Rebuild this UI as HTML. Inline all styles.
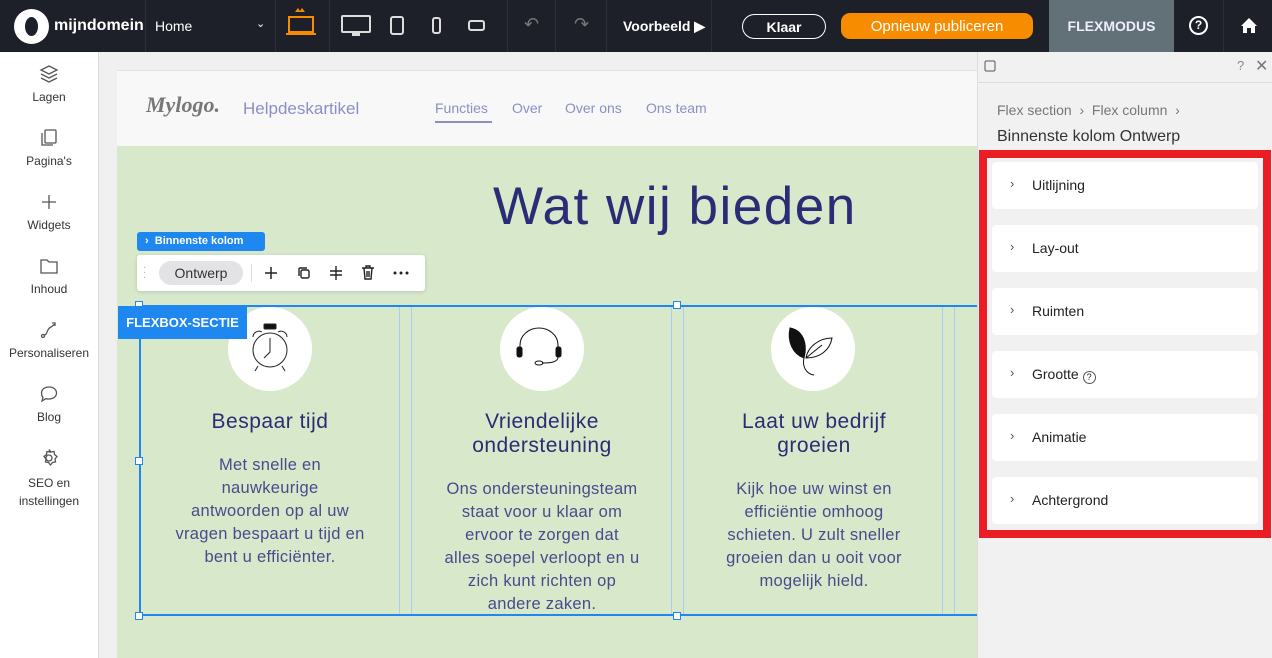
<!DOCTYPE html>
<html><head><meta charset="utf-8"><style>
*{box-sizing:border-box;margin:0;padding:0}
body{width:1272px;height:658px;overflow:hidden;font-family:"Liberation Sans",sans-serif;background:#f0f0f0;position:relative}
.a{position:absolute}
.top{left:0;top:0;width:1272px;height:52px;background:#1e2029;color:#fff}
.sep{position:absolute;top:0;width:1px;height:52px;background:#2e3039}
.side{left:0;top:52px;width:99px;height:606px;background:#fff;border-right:1px solid #ddd}
.si{position:absolute;left:0;width:98px;text-align:center;font-size:12px;color:#333}
.si svg{display:block;margin:0 auto 6px}
.page{left:117px;top:70px;width:860px;height:588px;background:#d8e8cb}
.hdr{left:117px;top:70px;width:860px;height:76px;background:#f8f8f8;border-top:1px solid #e2e2e2}
.nav{font-size:14px;color:#8b8fc4;top:100px}
.col{position:absolute;text-align:center;color:#2a2d75;white-space:nowrap}
.col h3{font-size:21px;font-weight:normal;line-height:24px;color:#2a2d75;letter-spacing:.5px}
.col p{font-size:16.5px;line-height:23px;color:#474b8c;margin-top:20px;letter-spacing:.3px}
.circ{position:absolute;width:84px;height:84px;border-radius:50%;background:#fff}
.panel{left:977px;top:52px;width:295px;height:606px;background:#f1f1f1;border-left:1px solid #ddd}
.card{position:absolute;left:992px;width:266px;height:47px;background:#fff;border-radius:4px;font-size:14px;color:#222}
.card span{position:absolute;left:40px;top:15px}
.card i{position:absolute;left:18px;top:14px;font-style:normal;color:#555;font-size:13px}
.h{position:absolute;width:8px;height:8px;background:#fff;border:1px solid #1e88f0}
.btn{display:flex;align-items:center;justify-content:center}
</style></head><body>
<div class="a top">
 <div class="a" style="left:14px;top:9px;width:35px;height:35px;border-radius:50%;background:#fff"></div>
 <div class="a" style="left:25px;top:17px;width:13px;height:19px;border-radius:50%;background:#1e2029"></div>
 <div class="a" style="left:54px;top:17px;font-size:16px;font-weight:bold">mijndomein</div>
 <div class="sep" style="left:145px"></div>
 <div class="a" style="left:155px;top:18px;font-size:14px">Home</div>
 <div class="a" style="left:256px;top:17px;font-size:11px">&#8964;</div>
 <div class="sep" style="left:275px"></div>
 <svg class="a" style="left:284px;top:6px" width="34" height="30"><path d="M11 6l3-4 2 3 2-3 3 4z" fill="#f88c00"/><rect x="5" y="11" width="24" height="15" fill="none" stroke="#f88c00" stroke-width="2"/><rect x="2" y="27" width="30" height="2" fill="#f88c00"/></svg>
 <div class="sep" style="left:329px"></div>
 <svg class="a" style="left:340px;top:14px" width="32" height="24"><rect x="2" y="2" width="28" height="16" rx="1" fill="none" stroke="#ddd" stroke-width="2"/><rect x="12" y="19" width="8" height="3" fill="#ddd"/></svg>
 <svg class="a" style="left:389px;top:15px" width="16" height="22"><rect x="2" y="2" width="12" height="17" rx="2" fill="none" stroke="#ddd" stroke-width="2"/></svg>
 <svg class="a" style="left:431px;top:16px" width="12" height="20"><rect x="2" y="2" width="7" height="15" rx="2" fill="none" stroke="#ddd" stroke-width="2"/></svg>
 <svg class="a" style="left:467px;top:18px" width="20" height="14"><rect x="2" y="3" width="15" height="9" rx="2" fill="none" stroke="#ddd" stroke-width="2"/></svg>
 <div class="sep" style="left:507px"></div>
 <div class="a" style="left:524px;top:14px;font-size:18px;color:#777">&#8630;</div>
 <div class="sep" style="left:555px"></div>
 <div class="a" style="left:574px;top:14px;font-size:18px;color:#777">&#8631;</div>
 <div class="sep" style="left:606px"></div>
 <div class="a" style="left:623px;top:18px;font-size:14px;font-weight:bold">Voorbeeld &#9654;</div>
 <div class="sep" style="left:711px"></div>
 <div class="a btn" style="left:742px;top:14px;width:84px;height:25px;border:1.5px solid #fff;border-radius:13px;font-size:14px;font-weight:bold">Klaar</div>
 <div class="a btn" style="left:841px;top:13px;width:192px;height:26px;background:#f88c00;border-radius:9px;font-size:15px">Opnieuw publiceren</div>
 <div class="a" style="left:1049px;top:0;width:125px;height:52px;background:#617177;text-align:center;line-height:52px;font-size:14px;font-weight:bold;color:#eef">FLEXMODUS</div>
 <div class="a" style="left:1189px;top:16px;width:19px;height:19px;border:2px solid #fff;border-radius:50%;text-align:center;font-size:12px;font-weight:bold;line-height:15px">?</div>
 <div class="sep" style="left:1223px"></div>
 <svg class="a" style="left:1240px;top:17px" width="18" height="17"><path d="M9 1L1 9h2v7h4v-5h4v5h4V9h2z" fill="#fff"/></svg>
</div>
<div class="a side">
 <div class="si" style="top:12px"><svg width="20" height="20" fill="none" stroke="#555" stroke-width="1.3"><path d="M10 2l8 4-8 4-8-4z M2 10l8 4 8-4 M2 14l8 4 8-4"/></svg>Lagen</div>
 <div class="si" style="top:76px"><svg width="20" height="20" fill="none" stroke="#555" stroke-width="1.3"><rect x="6" y="2" width="11" height="13" rx="1"/><path d="M3 5v12h11"/></svg>Pagina's</div>
 <div class="si" style="top:140px"><svg width="20" height="20" stroke="#555" stroke-width="1.3"><path d="M10 3v14M3 10h14"/></svg>Widgets</div>
 <div class="si" style="top:204px"><svg width="20" height="20" fill="none" stroke="#555" stroke-width="1.3"><path d="M2 4h6l2 2h8v11H2z"/></svg>Inhoud</div>
 <div class="si" style="top:268px"><svg width="20" height="20" fill="none" stroke="#555" stroke-width="1.3"><circle cx="4" cy="16" r="1.5"/><path d="M5 15c4 0 2-6 7-8l4-3M13 3h3v3"/></svg>Personaliseren</div>
 <div class="si" style="top:332px"><svg width="20" height="20" fill="none" stroke="#555" stroke-width="1.3"><path d="M10 3c4.5 0 7.5 2.6 7.5 6s-3 6-7.5 6c-1 0-2-.1-3-.4L3 17l1-3.5C3 12.3 2.5 10.8 2.5 9c0-3.4 3-6 7.5-6z"/></svg>Blog</div>
 <div class="si" style="top:396px;line-height:18px"><svg width="20" height="20" fill="none" stroke="#555" stroke-width="1.3"><circle cx="10" cy="10" r="3"/><path d="M10 1.5l2 2.5 3-.5.5 3 2.5 2-2 2.5.5 3-3 .5-2 2.5-2-2.5-3-.5.5-3-2-2.5 2.5-2 .5-3 3 .5z"/></svg>SEO en<br>instellingen</div>
</div>
<div class="a page"></div>
<div class="a hdr"></div>
<div class="a" style="left:146px;top:92px;font-family:'Liberation Serif',serif;font-style:italic;font-weight:bold;font-size:22px;color:#777">Mylogo.</div>
<div class="a" style="left:243px;top:99px;font-size:17px;color:#8b8fc4">Helpdeskartikel</div>
<div class="a nav" style="left:435px">Functies</div>
<div class="a" style="left:435px;top:121px;width:57px;height:2px;background:#8b8fc4"></div>
<div class="a nav" style="left:512px">Over</div>
<div class="a nav" style="left:565px">Over ons</div>
<div class="a nav" style="left:646px">Ons team</div>
<div class="a" style="left:493px;top:176px;font-size:53px;color:#2a2d75;letter-spacing:1.5px">Wat wij bieden</div>

<div class="a" style="left:139px;top:305px;width:840px;height:311px;border:2px solid #1e88f0;border-right:none"></div>
<div class="a" style="left:399px;top:307px;width:13px;height:307px;border-left:1px solid #a9cdf5;border-right:1px solid #a9cdf5"></div>
<div class="a" style="left:671px;top:307px;width:13px;height:307px;border-left:1px solid #a9cdf5;border-right:1px solid #a9cdf5"></div>
<div class="a" style="left:942px;top:307px;width:13px;height:307px;border-left:1px solid #a9cdf5;border-right:1px solid #a9cdf5"></div>
<div class="h" style="left:135px;top:301px"></div>
<div class="h" style="left:135px;top:457px"></div>
<div class="h" style="left:135px;top:612px"></div>
<div class="h" style="left:673px;top:301px"></div>
<div class="h" style="left:673px;top:612px"></div>

<div class="circ" style="left:228px;top:307px"></div>
<svg class="a" style="left:245px;top:322px" width="50" height="54" fill="none" stroke="#222" stroke-width="1"><rect x="19" y="2" width="12" height="5" rx="1" fill="#111"/><circle cx="25" cy="28" r="17"/><path d="M25 16v14l-6 6"/><path d="M8 15a6 6 0 0 1 9-5M42 15a6 6 0 0 0-9-5M13 44l-3 5M37 44l3 5"/></svg>
<div class="circ" style="left:500px;top:307px"></div>
<svg class="a" style="left:512px;top:325px" width="60" height="45" fill="none" stroke="#111" stroke-width="1"><path d="M8 27V20a19 17 0 0 1 38 0v7"/><rect x="5" y="22" width="5" height="10" rx="2" fill="#111"/><rect x="44" y="22" width="5" height="10" rx="2" fill="#111"/><path d="M46 32q0 6-14 6h-2"/><ellipse cx="27" cy="38" rx="4" ry="2"/></svg>
<div class="circ" style="left:771px;top:307px"></div>
<svg class="a" style="left:785px;top:318px" width="60" height="62" fill="none" stroke="#111" stroke-width="1"><path d="M5 10c12 2 18 14 14 30C8 36 2 24 5 10z" fill="#111"/><path d="M21 40c2-12 14-20 26-20-2 12-12 20-26 20zM21 40l16-13"/><path d="M19 40c-2 8 2 16 10 17"/></svg>

<div class="col" style="left:155px;top:410px;width:230px"><h3>Bespaar tijd</h3><p>Met snelle en<br>nauwkeurige<br>antwoorden op al uw<br>vragen bespaart u tijd en<br>bent u efficiënter.</p></div>
<div class="col" style="left:427px;top:410px;width:230px"><h3>Vriendelijke<br>ondersteuning</h3><p>Ons ondersteuningsteam<br>staat voor u klaar om<br>ervoor te zorgen dat<br>alles soepel verloopt en u<br>zich kunt richten op<br>andere zaken.</p></div>
<div class="col" style="left:699px;top:410px;width:230px"><h3>Laat uw bedrijf<br>groeien</h3><p>Kijk hoe uw winst en<br>efficiëntie omhoog<br>schieten. U zult sneller<br>groeien dan u ooit voor<br>mogelijk hield.</p></div>

<div class="a" style="left:118px;top:306px;width:129px;height:33px;background:#1e88f0;color:#fff;font-size:13px;font-weight:bold;line-height:33px;text-align:center">FLEXBOX-SECTIE</div>
<div class="a" style="left:137px;top:232px;width:128px;height:19px;background:#1e88f0;border-radius:3px;color:#fff;font-size:11px;font-weight:bold;line-height:19px;padding-left:8px">&#8250;&nbsp; Binnenste kolom</div>
<div class="a" style="left:137px;top:255px;width:288px;height:36px;background:#fff;border-radius:3px;box-shadow:0 1px 4px rgba(0,0,0,.15)">
 <div class="a" style="left:6px;top:10px;color:#aaa;font-size:10px;line-height:5px">·<br>·<br>·</div>
 <div class="a" style="left:22px;top:6px;width:84px;height:24px;background:#e3e3e5;border-radius:12px;text-align:center;line-height:24px;font-size:14px;color:#333">Ontwerp</div>
 <div class="a" style="left:114px;top:9px;width:1px;height:18px;background:#ddd"></div>
 <svg class="a" style="left:127px;top:11px" width="14" height="14" stroke="#222" stroke-width="1.5"><path d="M7 1v12M1 7h12"/></svg>
 <svg class="a" style="left:160px;top:11px" width="14" height="14" fill="none" stroke="#222" stroke-width="1.4"><rect x="4" y="4" width="8" height="8" rx="1.5"/><path d="M2 10V3a1 1 0 0 1 1-1h7"/></svg>
 <svg class="a" style="left:192px;top:10px" width="14" height="16" stroke="#222" stroke-width="1.4"><path d="M1 6h12M1 10h12M7 1v14"/></svg>
 <svg class="a" style="left:224px;top:10px" width="14" height="16" fill="none" stroke="#222" stroke-width="1.4"><path d="M1 3h12M5 3V1h4v2M3 3l1 11h6l1-11M6 6v6M8 6v6"/></svg>
 <svg class="a" style="left:256px;top:16px" width="16" height="4" fill="#222"><circle cx="2" cy="2" r="1.5"/><circle cx="8" cy="2" r="1.5"/><circle cx="14" cy="2" r="1.5"/></svg>
</div>

<div class="a panel"></div>
<svg class="a" style="left:984px;top:60px" width="12" height="12" fill="none" stroke="#555"><rect x="1" y="1" width="10" height="10" rx="1.5"/></svg>
<div class="a" style="left:1237px;top:58px;font-size:13px;color:#888">?</div>
<div class="a" style="left:1255px;top:56px;font-size:16px;color:#777">&#10005;</div>
<div class="a" style="left:978px;top:82px;width:294px;height:1px;background:#ddd"></div>
<div class="a" style="left:997px;top:102px;font-size:14px;color:#777">Flex section &nbsp;›&nbsp; Flex column &nbsp;›</div>
<div class="a" style="left:997px;top:128px;font-size:16px;color:#333">Binnenste kolom Ontwerp</div>
<div class="a" style="left:979px;top:150px;width:292px;height:388px;border:8px solid #ec1c24"></div>
<div class="card" style="top:162px"><i>›</i><span>Uitlijning</span></div>
<div class="card" style="top:225px"><i>›</i><span>Lay-out</span></div>
<div class="card" style="top:288px"><i>›</i><span>Ruimten</span></div>
<div class="card" style="top:351px"><i>›</i><span>Grootte <b style="display:inline-block;width:13px;height:13px;border:1px solid #555;border-radius:50%;font-size:9px;text-align:center;line-height:11px;font-weight:normal;vertical-align:-1px">?</b></span></div>
<div class="card" style="top:414px"><i>›</i><span>Animatie</span></div>
<div class="card" style="top:477px"><i>›</i><span>Achtergrond</span></div>
</body></html>
